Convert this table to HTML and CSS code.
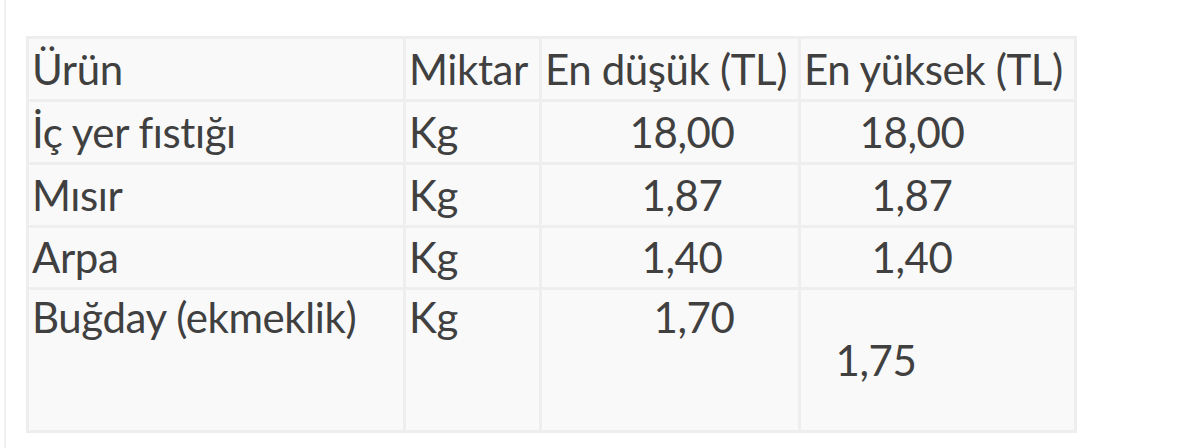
FILE: index.html
```html
<!DOCTYPE html>
<html lang="tr">
<head>
<meta charset="utf-8">
<title>Fiyatlar</title>
<link rel="stylesheet" href="styles.css">
</head>
<body>
<div class="page">
  <table class="prices">
    <colgroup>
      <col class="c-urun">
      <col class="c-miktar">
      <col class="c-min">
      <col class="c-max">
    </colgroup>
    <tbody>
      <tr class="row">
        <td>Ürün</td>
        <td>Miktar</td>
        <td class="hdr">En düşük (TL)</td>
        <td class="hdr">En yüksek (TL)</td>
      </tr>
      <tr class="row">
        <td>İç yer fıstığı</td>
        <td>Kg</td>
        <td class="min">18,00</td>
        <td class="max">18,00</td>
      </tr>
      <tr class="row">
        <td>Mısır</td>
        <td>Kg</td>
        <td class="min">1,87</td>
        <td class="max">1,87</td>
      </tr>
      <tr class="row short">
        <td>Arpa</td>
        <td>Kg</td>
        <td class="min">1,40</td>
        <td class="max">1,40</td>
      </tr>
      <tr class="row tall">
        <td class="top">Buğday (ekmeklik)</td>
        <td class="top">Kg</td>
        <td class="top min-b">1,70</td>
        <td class="max-b">1,75</td>
      </tr>
    </tbody>
  </table>
</div>
</body>
</html>
```
FILE: styles.css
```css
html, body {
  margin: 0;
  padding: 0;
  background: #ffffff;
}

.page {
  margin-left: 4px;
  border-left: 2px solid #f0f0f0;
  height: 448px;
  padding: 36px 0 0 20px;
  box-sizing: border-box;
}

.prices {
  border-collapse: collapse;
  table-layout: fixed;
  width: 1048px;
  font-family: Lato, "Open Sans", sans-serif;
  font-size: 42px;
  letter-spacing: -0.4px;
  color: #404040;
  border: 2px solid #f0f0f0;
}

.c-urun { width: 377px; }
.c-miktar { width: 136px; }
.c-min { width: 259px; }
.c-max { width: 276px; }

.prices td {
  background: #f9f9f9;
  border: 3px solid #eeeeee;
  padding: 0 0 0 3px;
  vertical-align: middle;
  white-space: nowrap;
  overflow: hidden;
  line-height: 1.2;
}

.row { height: 63px; }
.row.short { height: 62px; }
.row.tall { height: 143px; }

.prices td.top {
  vertical-align: top;
  padding-top: 2px;
}

.prices td.min {
  text-align: center;
  padding-left: 24px;
}

.prices td.max {
  text-align: center;
  padding-right: 54px;
}

.prices td.min-b {
  text-align: center;
  padding-left: 48px;
}

.prices td.max-b {
  text-align: center;
  padding-right: 126px;
}
```
